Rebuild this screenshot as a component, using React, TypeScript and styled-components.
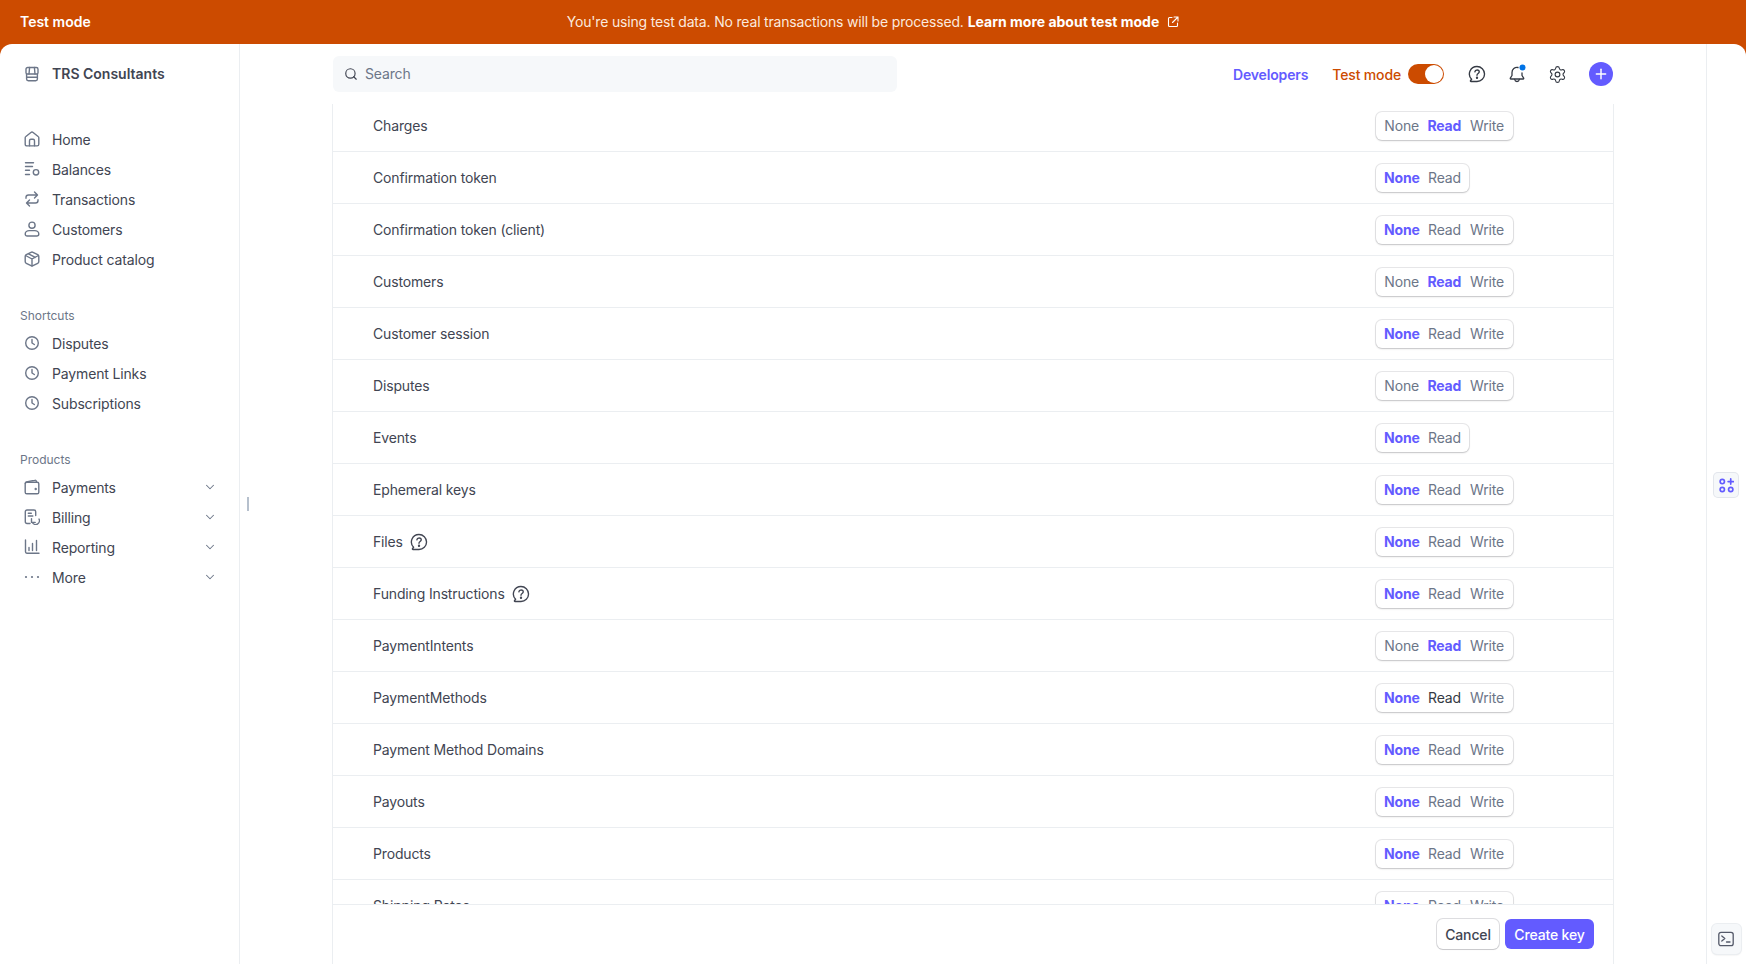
import React from "react";
import styled, { createGlobalStyle } from "styled-components";
import { Search as SearchGlyph, Plus, ChevronDown, Settings } from "lucide-react";

const GlobalStyle = createGlobalStyle`
  html, body { margin: 0; padding: 0; height: 100%; }
  body { font-family: Inter, "Liberation Sans", sans-serif; font-size: 14px; letter-spacing: -0.15px; color: #414552; background: #cc4b00; }
  * { box-sizing: border-box; }
`;

const Page = styled.div`
  height: 100vh;
  overflow: hidden;
  display: flex;
  flex-direction: column;
  background: #cc4b00;
`;

const Banner = styled.div`
  height: 44px;
  flex: none;
  display: grid;
  grid-template-columns: 200px 1fr 200px;
  align-items: center;
  padding: 0 20px;
  color: #fff;
  line-height: 20px;
`;

const BannerTitle = styled.span`
  font-weight: 600;
  letter-spacing: 0;
`;

const BannerText = styled.div`
  display: flex;
  align-items: center;
  justify-content: center;
  color: #fbe9de;
  letter-spacing: -0.18px;
  strong { font-weight: 700; letter-spacing: 0; color: #fff; margin-left: 4px; }
  svg { margin-left: 8px; }
`;

const Shell = styled.div`
  flex: 1;
  min-height: 0;
  display: flex;
  background: #fff;
  border-radius: 12px 12px 0 0;
  overflow: hidden;
`;

const Sidebar = styled.nav`
  width: 240px;
  flex: none;
  border-right: 1px solid #ebeef1;
  padding: 15px 20px 0;
`;

const Account = styled.div`
  height: 30px;
  display: flex;
  align-items: center;
  gap: 12px;
  padding: 0 0 1px 4px;
  font-weight: 600;
  letter-spacing: 0;
  color: #414552;
  svg { color: #6c7688; }
`;

const NavGroup = styled.div<{ $top: number }>`
  margin-top: ${(p) => p.$top}px;
`;

const NavLabel = styled.div`
  height: 18px;
  line-height: 18px;
  font-size: 12px;
  letter-spacing: 0;
  color: #6c7688;
  margin-bottom: 3px;
`;

const NavItem = styled.div`
  height: 30px;
  display: flex;
  align-items: center;
  gap: 12px;
  padding-left: 4px;
  color: #414552;
  svg.nav-icon { flex: none; color: #6c7688; }
`;

const NavName = styled.span`
  flex: 1;
  padding-top: 1px;
`;

const NavChevron = styled(ChevronDown)`
  color: #6c7688;
  margin-right: 2px;
`;

const Main = styled.div`
  flex: 1;
  min-width: 0;
  position: relative;
  display: flex;
  flex-direction: column;
`;

const Handle = styled.div`
  position: absolute;
  left: 7px;
  top: 453px;
  width: 2px;
  height: 14px;
  background: #b6c0cd;
`;

const TopBar = styled.header`
  height: 60px;
  flex: none;
  margin-bottom: -4px;
  position: relative;
  z-index: 2;
  background: #fff;
  display: flex;
  align-items: flex-start;
  padding: 12px 93px 0 93px;
`;

const SearchBox = styled.div`
  width: 564px;
  height: 36px;
  background: #f6f8fa;
  border-radius: 6px;
  display: flex;
  align-items: center;
  gap: 7px;
  padding: 0 11px 1px;
  color: #6c7688;
  svg { color: #414552; }
`;

const TopActions = styled.div`
  margin-left: auto;
  height: 36px;
  display: flex;
  align-items: center;
`;

const DevLink = styled.span`
  font-weight: 600;
  color: #635bff;
  margin-right: 24px;
`;

const ModeLabel = styled.span`
  font-weight: 500;
  color: #cc4b00;
  margin-right: 7px;
`;

const Toggle = styled.span`
  width: 36px;
  height: 20px;
  border-radius: 10px;
  background: #cc4b00;
  display: flex;
  justify-content: flex-end;
  padding: 1px;
  margin-right: 13px;
  &::after {
    content: "";
    width: 18px;
    height: 18px;
    border-radius: 50%;
    background: #fff;
  }
`;

const ActionIcon = styled.span`
  width: 40px;
  display: flex;
  justify-content: center;
  color: #353a44;
`;

const AddButton = styled.span`
  width: 24px;
  height: 24px;
  margin-left: 12px;
  border-radius: 50%;
  background: #635bff;
  color: #fff;
  display: flex;
  align-items: center;
  justify-content: center;
`;

const Column = styled.section`
  flex: 1;
  min-height: 0;
  margin: 0 92px;
  border: solid #ebeef1;
  border-width: 0 1px;
  display: flex;
  flex-direction: column;
`;

const Rows = styled.div`
  flex: 1;
  min-height: 0;
  overflow: hidden;
`;

const Row = styled.div`
  height: 52px;
  display: grid;
  grid-template-columns: 1003px auto;
  align-items: center;
  padding: 1px 0 0 40px;
  border-bottom: 1px solid #ebeef1;
`;

const RowName = styled.div`
  display: flex;
  align-items: center;
  gap: 7px;
  color: #414552;
  line-height: 20px;
  svg { color: #414552; }
`;

const Segment = styled.div`
  justify-self: start;
  height: 28px;
  display: flex;
  align-items: center;
  gap: 8px;
  padding: 0 8px;
  background: #fff;
  border-radius: 6px;
  box-shadow: 0 0 0 1px rgba(64, 68, 82, 0.12), 0 1px 2px rgba(0, 0, 0, 0.16);
`;

const Option = styled.span<{ $state: "on" | "off" | "hover" }>`
  display: inline-block;
  text-align: center;
  white-space: nowrap;
  line-height: 20px;
  font-weight: ${(p) => (p.$state === "on" ? 700 : 400)};
  color: ${(p) => (p.$state === "on" ? "#635bff" : p.$state === "hover" ? "#353a44" : "#6c7688")};
  &::after {
    content: attr(data-label);
    display: block;
    height: 0;
    overflow: hidden;
    visibility: hidden;
    font-weight: 600;
  }
`;

const Footer = styled.footer`
  height: 60px;
  flex: none;
  border-top: 1px solid #ebeef1;
  display: flex;
  justify-content: flex-end;
  align-items: flex-start;
  gap: 6px;
  padding: 14px 19px 0 0;
  background: #fff;
`;

const CancelButton = styled.button`
  height: 30px;
  width: 62px;
  padding: 0;
  font: inherit;
  letter-spacing: inherit;
  font-weight: 500;
  color: #414552;
  background: #fff;
  border: 0;
  border-radius: 6px;
  box-shadow: 0 0 0 1px rgba(64, 68, 82, 0.18), 0 1px 1px rgba(0, 0, 0, 0.1);
`;

const CreateButton = styled.button`
  height: 30px;
  width: 89px;
  padding: 0;
  font: inherit;
  letter-spacing: inherit;
  font-weight: 500;
  color: #fff;
  background: #635bff;
  border: 0;
  border-radius: 6px;
`;

const Rail = styled.aside`
  width: 40px;
  flex: none;
  border-left: 1px solid #ebeef1;
  display: flex;
  flex-direction: column;
  align-items: center;
  padding: 428px 1px 10px 0;
`;

const RailButton = styled.span<{ $tone: "accent" | "plain" }>`
  display: flex;
  align-items: center;
  justify-content: center;
  border-radius: 5px;
  background: #f6f8fa;
  ${(p) =>
    p.$tone === "accent"
      ? `width: 26px; height: 26px; box-shadow: inset 0 0 0 1px #e3e6ec; color: #635bff;`
      : `width: 29px; height: 30px; margin-top: auto; box-shadow: 0 0 0 1px #ebeef1, 0 1px 2px rgba(0,0,0,.12); color: #545969;`}
`;

type IconProps = { size?: number; sw?: number; children: React.ReactNode; className?: string };

const Glyph = ({ size = 16, sw = 1.4, children, className = "nav-icon" }: IconProps) => (
  <svg className={className} width={size} height={size} viewBox="0 0 16 16" fill="none" stroke="currentColor" strokeWidth={sw} strokeLinecap="round" strokeLinejoin="round">
    {children}
  </svg>
);

const StoreIcon = () => (
  <Glyph>
    <path d="M2 6.800V3.200c0-1 .7-1.700 1.700-1.700h8.600c1 0 1.700.7 1.700 1.700v3.600c0 .7-.5 1.200-1.200 1.200H3.200C2.500 8 2 7.500 2 6.800Z" />
    <path d="M5.600 1.500 5 8M10.400 1.500 11 8" />
    <path d="M2.600 8v5c0 1 .7 1.700 1.700 1.700h7.400c1 0 1.700-.7 1.700-1.700V8M2.800 11.300h10.400" />
  </Glyph>
);
const HomeIcon = () => (
  <Glyph>
    <path d="M1.200 6.800c0-.5.2-1 .7-1.300l5-4c.6-.5 1.600-.5 2.200 0l5 4c.5.300.7.800.7 1.300v6.400c0 1-.7 1.700-1.700 1.700H2.900c-1 0-1.700-.7-1.700-1.700V6.800Z" />
    <path d="M5.500 14.800V9.700c0-.8.6-1.400 1.400-1.400h2.200c.8 0 1.400.6 1.400 1.400v5.100" />
  </Glyph>
);
const BalancesIcon = () => (
  <Glyph>
    <path d="M1.500 1.800h8M1.500 5.500h7M1.500 9.200h4M1.500 13.500h4" />
    <circle cx="12" cy="11.300" r="2.700" />
  </Glyph>
);
const TransactionsIcon = () => (
  <Glyph>
    <path d="M10.500 1 13.500 4l-3 3M13.200 4H4.500C3 4 2 5 2 6.500v.8" />
    <path d="M5.500 15l-3-3 3-3M2.800 12h8.700c1.500 0 2.500-1 2.500-2.500v-.8" />
  </Glyph>
);
const UserIcon = () => (
  <Glyph>
    <circle cx="8" cy="4.200" r="3.100" />
    <path d="M1.200 13c0-2 2-3.400 4-3.400h5.600c2 0 4 1.400 4 3.400 0 1.300-.8 2-2 2H3.200c-1.200 0-2-.7-2-2Z" />
  </Glyph>
);
const BoxIcon = () => (
  <Glyph>
    <path d="M7 1.300c.6-.3 1.400-.3 2 0l4.700 2.400c.7.300 1.100 1 1.100 1.700v5.200c0 .7-.4 1.400-1.100 1.700L9 14.700c-.6.300-1.400.3-2 0l-4.700-2.400c-.7-.3-1.100-1-1.100-1.700V5.400c0-.7.4-1.400 1.100-1.700L7 1.300Z" />
    <path d="M1.600 4.500 8 8l6.400-3.500M8 8v7M4.600 2.800l6.600 3.600" />
  </Glyph>
);
const ClockIcon = () => (
  <Glyph sw={1.4}>
    <circle cx="8" cy="8" r="6.300" />
    <path d="M8 4.500V8l2.300 1.500" />
  </Glyph>
);
const WalletIcon = () => (
  <Glyph>
    <path d="M1.200 4.800c0-.9.7-1.600 1.600-1.600h10.400c.9 0 1.600.7 1.600 1.600v8.400c0 .9-.7 1.600-1.600 1.600H2.800c-.9 0-1.600-.7-1.600-1.600V4.800Z" />
    <path d="M1.300 4.400c0-.7.500-1.300 1.200-1.500l8.300-1.700c.8-.2 1.600.4 1.600 1.300v.7" />
    <circle cx="11.700" cy="10" r=".5" fill="currentColor" />
  </Glyph>
);
const BillingIcon = () => (
  <Glyph>
    <path d="M6 14.500H3c-1 0-1.700-.7-1.700-1.700V2.700C1.300 1.700 2 1 3 1h7c1 0 1.700.7 1.700 1.700v3.800" />
    <path d="M4.300 4.300h3M4.300 7h4.500" />
    <path d="M15 10a3.700 3.700 0 0 1-6.700 3.500M7.500 9.600v3.800h3.700" />
  </Glyph>
);
const ReportingIcon = () => (
  <Glyph>
    <path d="M1.500 1v11.800c0 .8.500 1.400 1.300 1.400H15M5 8.500v3M8.500 4.500v7M12.500 1.500v10" />
  </Glyph>
);
const MoreIcon = () => (
  <svg className="nav-icon" width={16} height={16} viewBox="0 0 16 16" fill="currentColor">
    <circle cx="2" cy="8" r="1.100" />
    <circle cx="8" cy="8" r="1.100" />
    <circle cx="14" cy="8" r="1.100" />
  </svg>
);
const HelpBubble = () => (
  <Glyph size={18} sw={1.2} className="help">
    <path d="M8 1.300a6.700 6.700 0 0 1 0 13.400H2.700c-.5 0-.7-.5-.4-.9l.9-1.100A6.700 6.700 0 0 1 8 1.300Z" />
    <path d="M6.100 6.100c.1-1 1-1.700 2-1.700s1.900.7 1.900 1.700c0 1.500-2 1.500-2 3" />
    <circle cx="8" cy="11.300" r=".45" fill="currentColor" />
  </Glyph>
);
const BellIcon = () => (
  <svg width={20} height={20} viewBox="0 0 20 20" fill="none" stroke="currentColor" strokeWidth={1.3} strokeLinecap="round" strokeLinejoin="round">
    <path d="M5 8.500a5 5 0 0 1 6-5M15 9v2.500l1.700 2.700c.2.400 0 .8-.5.800H3.800c-.5 0-.7-.4-.5-.8L5 11.500v-3" />
    <path d="M7.700 15.500c.2 1.200 1.100 2 2.300 2s2.100-.8 2.300-2" />
    <circle cx="15.500" cy="3.500" r="3" fill="#0073e6" stroke="none" />
  </svg>
);
const ExternalIcon = () => (
  <svg width={12} height={12} viewBox="0 0 12 12" fill="none" stroke="#fff" strokeWidth={1.1} strokeLinecap="round" strokeLinejoin="round">
    <path d="M5 1.500H2.500c-.6 0-1 .4-1 1v7c0 .6.4 1 1 1h7c.6 0 1-.4 1-1V7M7 1h4v4M11 1 5.500 6.500" />
  </svg>
);
const AppsIcon = () => (
  <svg width={15} height={15} viewBox="0 0 16 16" fill="none" stroke="currentColor" strokeWidth={1.8} strokeLinecap="round">
    <circle cx="3.500" cy="3.800" r="2.300" />
    <circle cx="3.500" cy="12.200" r="2.300" />
    <circle cx="12.500" cy="12.200" r="2.300" />
    <path d="M12.500 1v5.500M9.700 3.800h5.600" />
  </svg>
);
const TerminalIcon = () => (
  <svg width={16} height={16} viewBox="0 0 16 16" fill="none" stroke="currentColor" strokeWidth={1.3} strokeLinecap="round" strokeLinejoin="round">
    <rect x=".8" y="1.300" width="14.400" height="13.400" rx="2.200" />
    <path d="M3.800 5 6.800 7.500 3.800 10M8.500 11h3.500" />
  </svg>
);

const mainNav: [string, React.ReactNode][] = [
  ["Home", <HomeIcon />],
  ["Balances", <BalancesIcon />],
  ["Transactions", <TransactionsIcon />],
  ["Customers", <UserIcon />],
  ["Product catalog", <BoxIcon />],
];
const shortcuts = ["Disputes", "Payment Links", "Subscriptions"];
const products: [string, React.ReactNode][] = [
  ["Payments", <WalletIcon />],
  ["Billing", <BillingIcon />],
  ["Reporting", <ReportingIcon />],
  ["More", <MoreIcon />],
];

type Perm = { name: string; on: "None" | "Read"; noWrite?: boolean; help?: boolean; hover?: boolean };

const permissions: Perm[] = [
  { name: "Charges", on: "Read" },
  { name: "Confirmation token", on: "None", noWrite: true },
  { name: "Confirmation token (client)", on: "None" },
  { name: "Customers", on: "Read" },
  { name: "Customer session", on: "None" },
  { name: "Disputes", on: "Read" },
  { name: "Events", on: "None", noWrite: true },
  { name: "Ephemeral keys", on: "None" },
  { name: "Files", on: "None", help: true },
  { name: "Funding Instructions", on: "None", help: true },
  { name: "PaymentIntents", on: "Read" },
  { name: "PaymentMethods", on: "None", hover: true },
  { name: "Payment Method Domains", on: "None" },
  { name: "Payouts", on: "None" },
  { name: "Products", on: "None" },
  { name: "Shipping Rates", on: "None" },
];

const optionState = (p: Perm, label: string) => {
  if (p.on === label) return "on" as const;
  if (p.hover && label === "Read") return "hover" as const;
  return "off" as const;
};

export default function App() {
  return (
    <Page>
      <GlobalStyle />
      <Banner>
        <BannerTitle>Test mode</BannerTitle>
        <BannerText>
          You're using test data. No real transactions will be processed. <strong>Learn more about test mode</strong>
          <ExternalIcon />
        </BannerText>
      </Banner>
      <Shell>
        <Sidebar>
          <Account>
            <StoreIcon />
            TRS Consultants
          </Account>
          <NavGroup $top={35}>
            {mainNav.map(([label, icon]) => (
              <NavItem key={label}>
                {icon}
                <NavName>{label}</NavName>
              </NavItem>
            ))}
          </NavGroup>
          <NavGroup $top={33}>
            <NavLabel>Shortcuts</NavLabel>
            {shortcuts.map((label) => (
              <NavItem key={label}>
                <ClockIcon />
                <NavName>{label}</NavName>
              </NavItem>
            ))}
          </NavGroup>
          <NavGroup $top={33}>
            <NavLabel>Products</NavLabel>
            {products.map(([label, icon]) => (
              <NavItem key={label}>
                {icon}
                <NavName>{label}</NavName>
                <NavChevron size={14} strokeWidth={1.8} />
              </NavItem>
            ))}
          </NavGroup>
        </Sidebar>
        <Main>
          <Handle />
          <TopBar>
            <SearchBox>
              <SearchGlyph size={14} strokeWidth={2} />
              Search
            </SearchBox>
            <TopActions>
              <DevLink>Developers</DevLink>
              <ModeLabel>Test mode</ModeLabel>
              <Toggle />
              <ActionIcon>
                <HelpBubble />
              </ActionIcon>
              <ActionIcon>
                <BellIcon />
              </ActionIcon>
              <ActionIcon>
                <Settings size={19} strokeWidth={1.4} />
              </ActionIcon>
              <AddButton>
                <Plus size={16} strokeWidth={2.2} />
              </AddButton>
            </TopActions>
          </TopBar>
          <Column>
            <Rows>
              {permissions.map((perm) => (
                <Row key={perm.name}>
                  <RowName>
                    {perm.name}
                    {perm.help && <HelpBubble />}
                  </RowName>
                  <Segment>
                    {(perm.noWrite ? ["None", "Read"] : ["None", "Read", "Write"]).map((label) => (
                      <Option key={label} data-label={label} $state={optionState(perm, label)}>
                        {label}
                      </Option>
                    ))}
                  </Segment>
                </Row>
              ))}
            </Rows>
            <Footer>
              <CancelButton>Cancel</CancelButton>
              <CreateButton>Create key</CreateButton>
            </Footer>
          </Column>
        </Main>
        <Rail>
          <RailButton $tone="accent">
            <AppsIcon />
          </RailButton>
          <RailButton $tone="plain">
            <TerminalIcon />
          </RailButton>
        </Rail>
      </Shell>
    </Page>
  );
}
